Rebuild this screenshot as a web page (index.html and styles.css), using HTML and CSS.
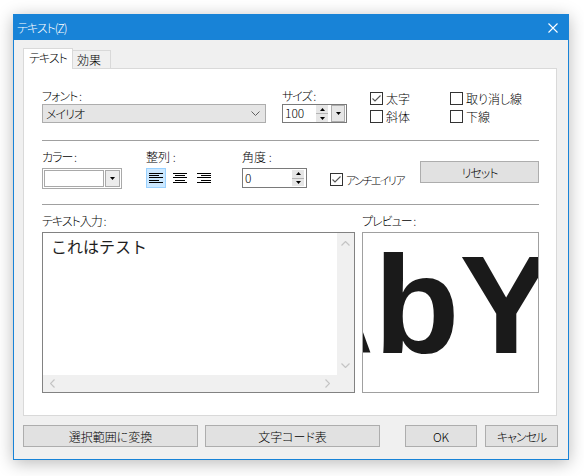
FILE: index.html
```html
<!DOCTYPE html>
<html lang="ja">
<head>
<meta charset="utf-8">
<title>テキスト(Z)</title>
<link rel="stylesheet" href="styles.css">
</head>
<body>
<div class="window">
  <div class="titlebar">
    <span class="title kana">テキスト(Z)</span>
    <svg class="close" width="10" height="10" viewBox="0 0 10 10"><path d="M0.5 0.5L9.5 9.5M9.5 0.5L0.5 9.5" stroke="#fff" stroke-width="1.1" fill="none"/></svg>
  </div>
  <div class="client">
    <div class="tabs">
      <div class="tab active kana">テキスト</div>
      <div class="tab">効果</div>
    </div>
    <div class="panel">
      <div class="row row1">
        <div class="field f-font">
          <div class="label kana">フォント :</div>
          <div class="select">
            <span class="kana">メイリオ</span>
            <svg width="9" height="5" viewBox="0 0 9 5"><path d="M0.5 0.5L4.5 4.5L8.5 0.5" stroke="#606060" fill="none"/></svg>
          </div>
        </div>
        <div class="field f-size">
          <div class="label kana">サイズ :</div>
          <div class="spinbox sb-size">
            <span class="val">100</span>
            <span class="spin">
              <span class="half"><svg width="5" height="3" viewBox="0 0 5 3"><path d="M0 3L2.5 0L5 3Z" fill="#000"/></svg></span>
              <span class="half"><svg width="5" height="3" viewBox="0 0 5 3"><path d="M0 0L2.5 3L5 0Z" fill="#000"/></svg></span>
            </span>
            <span class="drop"><svg width="5" height="3" viewBox="0 0 5 3"><path d="M0 0L2.5 3L5 0Z" fill="#000"/></svg></span>
          </div>
        </div>
        <div class="checks">
          <div class="check"><span class="box"><svg width="11" height="11" viewBox="0 0 11 11"><path d="M1.5 5.5L4 8L9.5 2.5" stroke="#555" stroke-width="1.1" fill="none"/></svg></span>太字</div>
          <div class="check"><span class="box"></span>取り消し線</div>
          <div class="check"><span class="box"></span>斜体</div>
          <div class="check"><span class="box"></span>下線</div>
        </div>
      </div>
      <div class="sep"></div>
      <div class="row row2">
        <div class="field f-color">
          <div class="label kana">カラー :</div>
          <div class="combo">
            <span class="cfield"></span>
            <span class="cbtn"><svg width="5" height="3" viewBox="0 0 5 3"><path d="M0 0L2.5 3L5 0Z" fill="#000"/></svg></span>
          </div>
        </div>
        <div class="field f-align">
          <div class="label">整列 :</div>
          <div class="aligns">
            <span class="abtn selected">
              <svg width="14" height="10" viewBox="0 0 14 10"><rect x="0" y="0" width="14" height="1"/><rect x="0" y="2" width="10" height="1"/><rect x="0" y="4" width="14" height="1"/><rect x="0" y="7" width="10" height="1"/><rect x="0" y="9" width="14" height="1"/></svg>
            </span>
            <span class="abtn">
              <svg width="14" height="10" viewBox="0 0 14 10"><rect x="0" y="0" width="14" height="1"/><rect x="2" y="2" width="10" height="1"/><rect x="0" y="4" width="14" height="1"/><rect x="2" y="7" width="10" height="1"/><rect x="0" y="9" width="14" height="1"/></svg>
            </span>
            <span class="abtn">
              <svg width="14" height="10" viewBox="0 0 14 10"><rect x="0" y="0" width="14" height="1"/><rect x="4" y="2" width="10" height="1"/><rect x="0" y="4" width="14" height="1"/><rect x="4" y="7" width="10" height="1"/><rect x="0" y="9" width="14" height="1"/></svg>
            </span>
          </div>
        </div>
        <div class="field f-angle">
          <div class="label">角度 :</div>
          <div class="spinbox sb-angle">
            <span class="val">0</span>
            <span class="spin">
              <span class="half"><svg width="5" height="3" viewBox="0 0 5 3"><path d="M0 3L2.5 0L5 3Z" fill="#000"/></svg></span>
              <span class="half"><svg width="5" height="3" viewBox="0 0 5 3"><path d="M0 0L2.5 3L5 0Z" fill="#000"/></svg></span>
            </span>
          </div>
        </div>
        <div class="check aa"><span class="box"><svg width="11" height="11" viewBox="0 0 11 11"><path d="M1.5 5.5L4 8L9.5 2.5" stroke="#555" stroke-width="1.1" fill="none"/></svg></span><span class="aatext">アンチエイリア</span></div>
        <div class="button reset"><span class="kana">リセット</span></div>
      </div>
      <div class="sep"></div>
      <div class="row row3">
        <div class="field f-text">
          <div class="label kana">テキスト入力 :</div>
          <div class="textarea">
            <div class="tcontent">これはテスト</div>
            <div class="vscroll">
              <svg width="9" height="5" viewBox="0 0 9 5"><path d="M0.5 4.5L4.5 0.5L8.5 4.5" stroke="#c4c4c4" stroke-width="1.2" fill="none"/></svg>
              <svg width="9" height="5" viewBox="0 0 9 5"><path d="M0.5 0.5L4.5 4.5L8.5 0.5" stroke="#c4c4c4" stroke-width="1.2" fill="none"/></svg>
            </div>
            <div class="hscroll">
              <svg width="5" height="9" viewBox="0 0 5 9"><path d="M4.5 0.5L0.5 4.5L4.5 8.5" stroke="#c4c4c4" stroke-width="1.2" fill="none"/></svg>
              <svg width="5" height="9" viewBox="0 0 5 9"><path d="M0.5 0.5L4.5 4.5L0.5 8.5" stroke="#c4c4c4" stroke-width="1.2" fill="none"/></svg>
            </div>
            <div class="corner"></div>
          </div>
        </div>
        <div class="field f-preview">
          <div class="label kana">プレビュー :</div>
          <div class="preview"><span class="sample">AbY</span></div>
        </div>
      </div>
    </div>
    <div class="buttons">
      <div class="button b-conv">選択範囲に変換</div>
      <div class="button b-code">文字コード表</div>
      <div class="button b-ok">OK</div>
      <div class="button b-cancel"><span class="kana">キャンセル</span></div>
    </div>
  </div>
</div>
</body>
</html>
```

FILE: styles.css
```css
* { box-sizing: border-box; }
html, body { margin: 0; padding: 0; }
body {
  background: #fff;
  width: 584px;
  height: 476px;
  overflow: hidden;
  padding: 14px 0 0 13px;
  font-family: "Noto Sans CJK JP", "Liberation Sans", sans-serif;
  font-size: 12px;
  font-weight: 300;
  color: #000;
  font-feature-settings: "palt";
}
.kana { letter-spacing: -1px; }
.window {
  width: 556px;
  height: 446px;
  border: 1px solid #1883d7;
  background: #f0f0f0;
  box-shadow: 0 3px 16px rgba(0,0,0,0.28);
  display: flex;
  flex-direction: column;
}
.titlebar {
  flex: none;
  height: 25px;
  background: #1883d7;
  color: #fff;
  display: flex;
  align-items: center;
  justify-content: space-between;
  padding: 0 10px 0 3px;
  line-height: 1;
}
.title { font-size: 12px; }
.close { display: block; }
.client { padding: 8px 10px 12px 9px; }
.tabs { display: flex; align-items: flex-end; height: 20px; }
.tab {
  height: 18px;
  width: 38px;
  border: 1px solid #d9d9d9;
  border-left: none;
  border-bottom: none;
  background: #f0f0f0;
  padding-left: 4px;
  line-height: 17px;
  white-space: nowrap;
}
.tab.active {
  height: 21px;
  width: 50px;
  border-left: 1px solid #d9d9d9;
  background: #fff;
  margin-bottom: -1px;
  position: relative;
  z-index: 1;
  padding-left: 5px;
  line-height: 18px;
}
.panel {
  width: 534px;
  border: 1px solid #d9d9d9;
  background: #fff;
  padding: 19px 17px 22px 18px;
}
.row { display: flex; align-items: flex-start; }
.row1 { height: 36px; }
.row2 { height: 39px; margin-top: 8px; }
.row3 { margin-top: 8px; }
.sep { height: 1px; background: #a0a0a0; margin-top: 16px; }
.label { height: 16px; line-height: 16px; white-space: nowrap; }
.f-font { width: 224px; }
.select {
  height: 19px;
  background: #e5e5e5;
  border: 1px solid #adadad;
  display: flex;
  align-items: center;
  justify-content: space-between;
  padding: 0 5px 0 3px;
}
.select svg { display: block; }
.f-size { width: 65px; margin-left: 16px; }
.spinbox {
  border: 1px solid #7a7a7a;
  background: #fff;
  display: flex;
  align-items: stretch;
}
.sb-size { height: 19px; }
.sb-angle { height: 20px; margin-top: 3px; }
.val { flex: 1; padding-left: 2px; line-height: 16px; }
.sb-angle .val { line-height: 17px; }
.spin {
  width: 12px;
  display: flex;
  flex-direction: column;
  background: #e6e6e6;
}
.sb-angle .spin { margin: 1px 2px 1px 0; }
.half { flex: 1; display: flex; align-items: center; justify-content: center; }
.half + .half { border-top: 1px solid #b4b4b4; }
.half svg, .drop svg, .cbtn svg { display: block; }
.drop {
  width: 14px;
  margin: 0 1px 0 3px;
  background: #e6e6e6;
  border: 1px solid #adadad;
  display: flex;
  align-items: center;
  justify-content: center;
}
.checks {
  margin-left: 23px;
  margin-top: 4px;
  display: grid;
  grid-template-columns: 80px auto;
  grid-auto-rows: 18px;
}
.check { display: flex; align-items: flex-start; white-space: nowrap; line-height: 13px; }
.box {
  width: 13px;
  height: 13px;
  border: 1px solid #333;
  background: #fff;
  margin-right: 3px;
  flex: none;
}
.box svg { display: block; }
.f-color { width: 80px; }
.combo {
  margin-top: 3px;
  height: 21px;
  border: 1px solid #a9a9a9;
  padding: 1px;
  display: flex;
  gap: 1px;
}
.cfield { width: 60px; border: 1px solid #a9a9a9; background: #fff; }
.cbtn {
  flex: 1;
  border: 1px solid #a9a9a9;
  background: #ececec;
  display: flex;
  align-items: center;
  justify-content: center;
}
.f-align { width: 68px; margin-left: 24px; }
.aligns { display: flex; gap: 4px; margin-top: 3px; }
.abtn {
  width: 20px;
  height: 20px;
  display: flex;
  align-items: center;
  justify-content: center;
  border: 1px solid transparent;
}
.abtn svg { display: block; fill: #000; }
.abtn.selected { background: #cce8ff; border-color: #99d1ff; }
.f-angle { width: 65px; margin-left: 28px; }
.aa { margin-left: 23px; margin-top: 24px; }
.aatext { font-size: 11px; letter-spacing: -1.6px; line-height: 14px; }
.button {
  background: #e1e1e1;
  border: 1px solid #adadad;
  display: flex;
  align-items: center;
  justify-content: center;
  height: 22px;
  white-space: nowrap;
}
.reset { margin-left: auto; margin-top: 12px; width: 119px; }
.f-text { width: 313px; }
.textarea {
  margin-top: 3px;
  height: 161px;
  border: 1px solid #828282;
  background: #fff;
  display: grid;
  grid-template-columns: 1fr 17px;
  grid-template-rows: 1fr 17px;
}
.tcontent {
  padding: 3px 0 0 8px;
  font-size: 16px;
  font-weight: 400;
  line-height: 20px;
  color: #1e1e1e;
  font-feature-settings: normal;
}
.vscroll {
  background: #f0f0f0;
  display: flex;
  flex-direction: column;
  align-items: center;
  justify-content: space-between;
  padding: 8px 0 7px;
}
.hscroll {
  background: #f0f0f0;
  display: flex;
  align-items: center;
  justify-content: space-between;
  padding: 0 7px 0 7px;
}
.vscroll svg, .hscroll svg { display: block; }
.corner { background: #f0f0f0; }
.f-preview { width: 177px; margin-left: 7px; }
.preview {
  margin-top: 3px;
  height: 161px;
  border: 1px solid #a0a0a0;
  background: #fff;
  position: relative;
  overflow: hidden;
}
.sample {
  position: absolute;
  left: -90px;
  top: 2px;
  font-family: "Liberation Sans", Arial, sans-serif;
  font-weight: bold;
  font-size: 140px;
  line-height: 1;
  color: #1a1a1a;
  white-space: nowrap;
  font-feature-settings: normal;
}
.buttons { display: flex; margin-top: 9px; }
.b-conv { width: 175px; }
.b-code { width: 175px; margin-left: 7px; }
.b-ok { width: 72px; margin-left: 25px; }
.b-cancel { width: 73px; margin-left: 8px; }
```
